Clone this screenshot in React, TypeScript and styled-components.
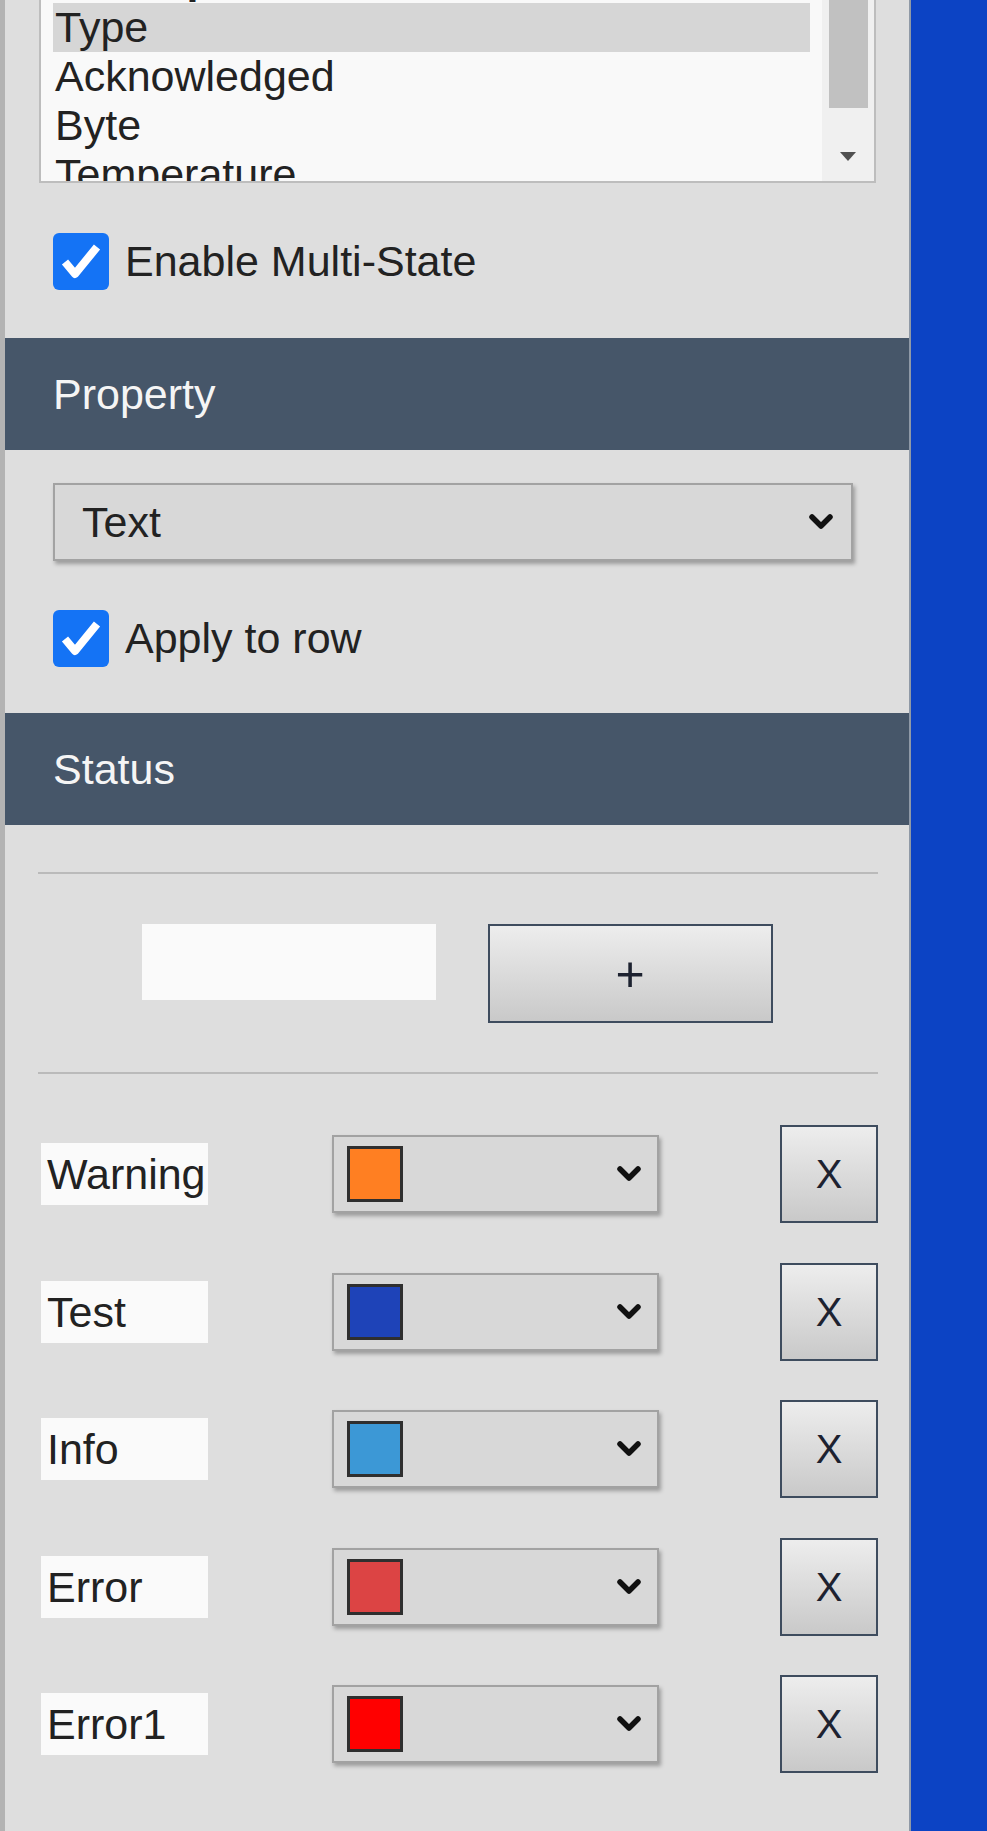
import { FC, useLayoutEffect, useRef } from "react";
import styled, { createGlobalStyle } from "styled-components";

const GlobalStyle = createGlobalStyle`
  html, body {
    margin: 0;
    padding: 0;
  }
  body {
    font-family: "Liberation Sans", Arial, sans-serif;
    background: #dedede;
  }
`;

const Page = styled.div`
  display: flex;
  min-height: 1831px;
`;

const Panel = styled.div`
  flex: none;
  width: 904px;
  display: flex;
  flex-direction: column;
  background: #dedede;
  border-left: 5px solid #b3b3b3;
  border-right: 2px solid #8f99a6;
  color: #222;
  font-size: 43px;
`;

const Desktop = styled.div`
  flex: 1;
  background: #0c43c4;
`;

/* ---- list box ---- */

const ListBox = styled.div`
  box-sizing: border-box;
  height: 183px;
  margin: 0 33px 0 34px;
  display: flex;
  background: #f9f9f9;
  border: 2px solid #bdbdbd;
  border-top: none;
`;

const ListItems = styled.div`
  flex: 1;
  overflow: hidden;
  padding: 0 12px;
`;

const ListItem = styled.div<{ $selected?: boolean; $group?: boolean }>`
  height: 49px;
  line-height: 49px;
  padding-left: 2px;
  white-space: nowrap;
  font-weight: ${(p) => (p.$group ? 700 : 400)};
  background: ${(p) => (p.$selected ? "#d6d6d6" : "transparent")};
`;

const ScrollTrack = styled.div`
  width: 52px;
  display: flex;
  flex-direction: column;
  align-items: center;
  justify-content: space-between;
  padding-bottom: 20px;
  background: #f0f0f0;
`;

const ScrollThumb = styled.div`
  width: 39px;
  height: 108px;
  margin-left: 1px;
  background: #c1c1c1;
`;

const ScrollArrow = styled.div`
  width: 0;
  height: 0;
  border-left: 8px solid transparent;
  border-right: 8px solid transparent;
  border-top: 9px solid #505050;
`;

/* ---- checkbox rows ---- */

const CheckRow = styled.label<{ $top: number; $bottom: number }>`
  display: flex;
  align-items: center;
  gap: 16px;
  height: 57px;
  margin: ${(p) => p.$top}px 0 ${(p) => p.$bottom}px;
  padding-left: 48px;
  white-space: nowrap;
`;

const CheckBox = styled.span`
  flex: none;
  width: 56px;
  height: 57px;
  border-radius: 6px;
  background: #1473f5;
  display: flex;
`;

/* ---- section headers ---- */

const Header = styled.div`
  height: 112px;
  display: flex;
  align-items: center;
  padding-left: 48px;
  background: #465669;
  color: #f5f5f5;
`;

/* ---- dropdowns ---- */

const Select = styled.div`
  box-sizing: border-box;
  display: flex;
  align-items: center;
  height: 78px;
  border: 2px solid #a2a2a2;
  background: #d8d8d8;
  box-shadow: 2px 3px 4px rgba(0, 0, 0, 0.3);
`;

const PropertySelect = styled(Select)`
  margin: 33px 56px 0 48px;
  padding: 0 17px 0 27px;
`;

const ColorSelect = styled(Select)`
  flex: none;
  width: 327px;
  margin-left: 124px;
  padding: 0 15px 0 13px;
`;

const SelectText = styled.span`
  flex: 1;
`;

const Swatch = styled.span<{ $color: string }>`
  box-sizing: border-box;
  width: 56px;
  height: 56px;
  margin-right: auto;
  border: 3px solid #2f2f2f;
  background: ${(p) => p.$color};
`;

/* ---- status editor ---- */

const Divider = styled.hr<{ $top: number }>`
  margin: ${(p) => p.$top}px 31px 0 33px;
  border: none;
  height: 2px;
  background: #bababa;
`;

const AddRow = styled.div`
  display: flex;
  justify-content: center;
  align-items: flex-start;
  gap: 52px;
  margin-top: 50px;
`;

const NameInput = styled.input`
  box-sizing: border-box;
  width: 294px;
  height: 76px;
  border: none;
  outline: none;
  padding: 0 8px;
  background: #fafafa;
  font: inherit;
`;

const ToolButton = styled.button<{ $wide?: boolean }>`
  box-sizing: border-box;
  flex: none;
  width: ${(p) => (p.$wide ? 285 : 98)}px;
  height: ${(p) => (p.$wide ? 99 : 98)}px;
  margin-left: ${(p) => (p.$wide ? "0" : "auto")};
  padding: 0;
  border: 2px solid #3e4c5e;
  background: linear-gradient(#ededed, #c9c9c9);
  color: #1d2230;
  font-family: "Liberation Sans", Arial, sans-serif;
  font-size: ${(p) => (p.$wide ? 50 : 40)}px;
  line-height: 1;
`;

const StatusList = styled.div`
  display: flex;
  flex-direction: column;
  gap: 39.5px;
  margin-top: 51px;
  padding: 0 31px 0 36px;
`;

const StatusRow = styled.div`
  display: flex;
  align-items: center;
  height: 98px;
`;

const StatusName = styled.div`
  box-sizing: border-box;
  flex: none;
  width: 167px;
  height: 62px;
  padding-left: 6px;
  line-height: 62px;
  overflow: hidden;
  white-space: nowrap;
  background: #fafafa;
`;

const Chevron: FC = () => (
  <svg width="26" height="18" viewBox="0 0 26 18">
    <polyline
      points="4,4 13,13 22,4"
      fill="none"
      stroke="#111"
      strokeWidth="5.5"
      strokeLinecap="round"
      strokeLinejoin="round"
    />
  </svg>
);

const Check: FC<{ label: string; top: number; bottom: number }> = ({ label, top, bottom }) => (
  <CheckRow $top={top} $bottom={bottom}>
    <CheckBox>
      <svg width="56" height="57" viewBox="0 0 56 57">
        <polyline
          points="12,29 22,41 44,14"
          fill="none"
          stroke="#fff"
          strokeWidth="8"
          strokeLinejoin="round"
        />
      </svg>
    </CheckBox>
    {label}
  </CheckRow>
);

const fields = ["Description", "Type", "Acknowledged", "Byte", "Temperature"];

const statuses = [
  { name: "Warning", color: "#ff7f22" },
  { name: "Test", color: "#1e43b8" },
  { name: "Info", color: "#3c98d6" },
  { name: "Error", color: "#dc4444" },
  { name: "Error1", color: "#ff0000" },
];

const FieldList: FC = () => {
  const ref = useRef<HTMLDivElement>(null);

  // the list is scrolled one row down, "Type" is the current pick
  useLayoutEffect(() => {
    if (ref.current) ref.current.scrollTop = 46;
  }, []);

  return (
    <ListBox role="listbox">
      <ListItems ref={ref}>
        {fields.map((f, i) => (
          <ListItem key={f} $group={i === 0} $selected={f === "Type"}>
            {f}
          </ListItem>
        ))}
      </ListItems>
      <ScrollTrack>
        <ScrollThumb />
        <ScrollArrow />
      </ScrollTrack>
    </ListBox>
  );
};

const App: FC = () => {
  return (
    <Page>
      <GlobalStyle />
      <Panel>
        <FieldList />
        <Check label="Enable Multi-State" top={50} bottom={48} />

        <Header>Property</Header>
        <PropertySelect role="combobox">
          <SelectText>Text</SelectText>
          <Chevron />
        </PropertySelect>
        <Check label="Apply to row" top={49} bottom={46} />

        <Header>Status</Header>
        <Divider $top={47} />
        <AddRow>
          <NameInput />
          <ToolButton $wide>+</ToolButton>
        </AddRow>
        <Divider $top={49} />

        <StatusList>
          {statuses.map((s) => (
            <StatusRow key={s.name}>
              <StatusName>{s.name}</StatusName>
              <ColorSelect role="combobox">
                <Swatch $color={s.color} />
                <Chevron />
              </ColorSelect>
              <ToolButton>X</ToolButton>
            </StatusRow>
          ))}
        </StatusList>
      </Panel>
      <Desktop />
    </Page>
  );
};

export default App;
